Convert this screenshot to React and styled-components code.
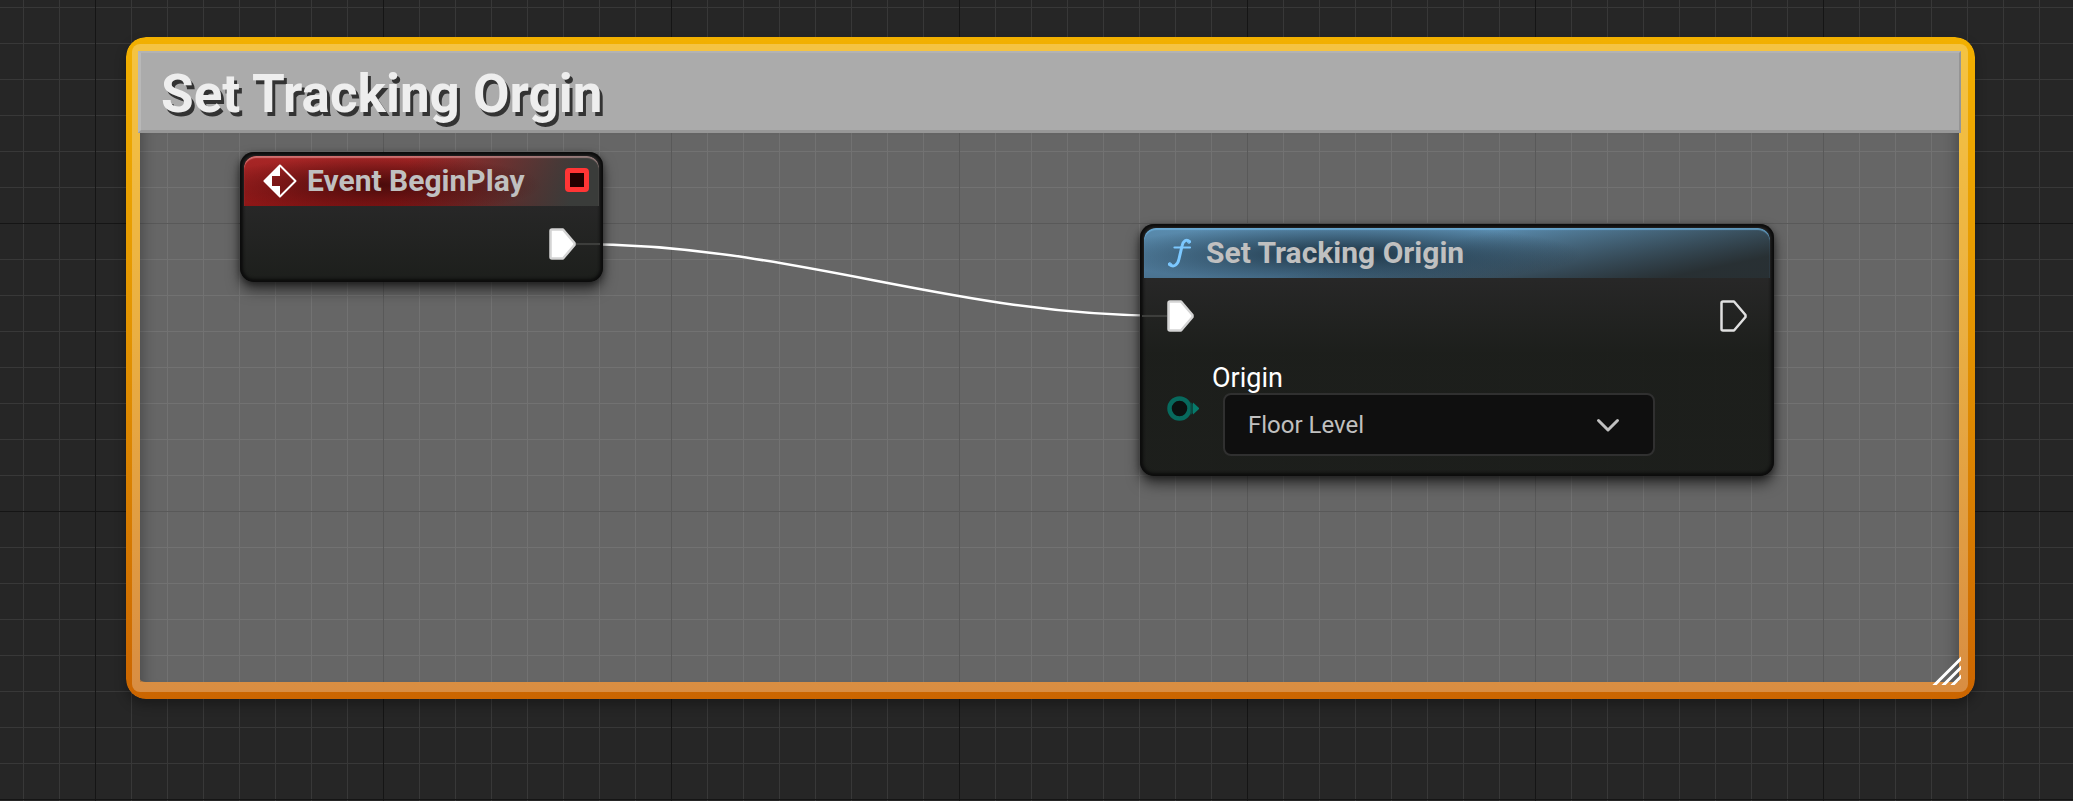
import React from 'react';
import styled, { createGlobalStyle } from 'styled-components';

const Global = createGlobalStyle`
  * { box-sizing: border-box; }
  body { margin: 0; background: #262626; }
`;

const line = (dir, color, size) =>
  `linear-gradient(${dir}, ${color} 1px, transparent 1px) 95px 223px / ${size}px ${size}px`;

const Canvas = styled.main`
  position: relative;
  min-height: 100vh;
  padding: 37px 98px 102px 126px;
  overflow: hidden;
  font-family: Roboto, "Liberation Sans", sans-serif;
  background:
    ${line('to right', '#151515', 288)},
    ${line('to bottom', '#151515', 288)},
    ${line('to right', '#383838', 36)},
    ${line('to bottom', '#383838', 36)},
    #262626;
`;

const Comment = styled.section`
  position: relative;
  display: flex;
  flex-direction: column;
  min-height: 662px;
  padding: 14px 14px 14px 12px;
  border-radius: 20px;
  box-shadow: 0 6px 12px rgba(0, 0, 0, 0.3);

  &::before {
    content: "";
    position: absolute;
    inset: 0;
    border: solid transparent;
    border-width: 14px 16px 17px 14px;
    border-radius: 20px;
    background: linear-gradient(#f2b000, #e39300 45%, #cb6500) border-box;
    mask: linear-gradient(#000 0 0) padding-box exclude, linear-gradient(#000 0 0) border-box;
  }

  &::after {
    content: "";
    position: absolute;
    inset: 7px 7px 7px 6px;
    border-radius: 8px;
    background: rgba(255, 255, 255, 0.26);
  }
`;

const CommentHeader = styled.header`
  position: relative;
  z-index: 1;
  height: 82px;
  padding: 0 20px;
  border: solid;
  border-width: 2px 2px 3px 3px;
  border-color: #b3b3b3 #959595 #979797 #b8b8b8;
  background: #ababab;
`;

const CommentTitle = styled.h1`
  margin: 0;
  color: #eee;
  font-size: 53px;
  font-weight: 700;
  line-height: 82px;
  white-space: nowrap;
  text-shadow: 3px 4px 0 #333;
`;

const CommentBody = styled.div`
  position: relative;
  z-index: 1;
  display: flex;
  flex: 1;
  align-items: flex-end;
  justify-content: flex-end;
  &::before {
    content: "";
    position: absolute;
    inset: 0 2px 3px 2px;
    background: rgba(255, 255, 255, 0.05);
    box-shadow: inset 14px 0 14px -12px rgba(0, 0, 0, 0.3), inset -14px 0 14px -12px rgba(0, 0, 0, 0.3);
  }
`;

const ResizeGrip = styled.svg`
  position: relative;
  width: 29px;
  height: 29px;
  stroke: #fff;
  stroke-width: 3;
`;

const Wire = styled.svg`
  position: absolute;
  z-index: 2;
  left: 576px;
  top: 240px;
  width: 592px;
  height: 80px;
  fill: none;
  stroke: #fff;
  stroke-width: 2.5;
`;

const Node = styled.article`
  position: absolute;
  z-index: 3;
  left: ${(p) => p.$x}px;
  top: ${(p) => p.$y}px;
  width: ${(p) => p.$w}px;
  padding: 4px;
  border-radius: 14px;
  background: linear-gradient(rgba(38, 38, 38, 0.98) 54px, rgba(27, 29, 26, 0.98) 130px);
  box-shadow:
    inset 0 0 3px 3px #0c0c0c,
    0 8px 14px rgba(0, 0, 0, 0.55),
    0 2px 6px rgba(0, 0, 0, 0.4);
`;

const heads = {
  event: `
    radial-gradient(ellipse 46% 60% at 38% 58%, rgba(60, 8, 8, 0.85), rgba(60, 8, 8, 0) 100%),
    linear-gradient(105deg, rgba(58, 60, 58, 0) 45%, rgba(58, 60, 58, 1) 92%),
    linear-gradient(#a92727, #8c1616)`,
  call: `
    radial-gradient(ellipse 38% 60% at 32% 52%, rgba(24, 44, 58, 0.9), rgba(24, 44, 58, 0) 100%),
    linear-gradient(168deg, rgba(38, 44, 46, 0) 42%, rgba(38, 44, 46, 0.95) 88%),
    linear-gradient(#5a8cae, #4a7391)`,
};

const NodeHeader = styled.header`
  display: flex;
  align-items: center;
  height: 50px;
  padding: 0 10px 0 ${(p) => (p.$kind === 'event' ? 18 : 23)}px;
  gap: ${(p) => (p.$kind === 'event' ? 10 : 14)}px;
  border-radius: 12px 12px 0 0;
  background: ${(p) => heads[p.$kind]};
  box-shadow: inset 0 2px 1px ${(p) => (p.$kind === 'event' ? 'rgba(255, 200, 200, 0.45)' : 'rgba(110, 180, 225, 0.7)')};
`;

const NodeTitle = styled.h2`
  flex: 1;
  margin: 0;
  color: #c0c0c0;
  font-size: 30px;
  font-weight: 700;
  line-height: 34px;
  white-space: nowrap;
`;

const Delegate = styled.button`
  width: 24px;
  height: 24px;
  margin-bottom: 2px;
  padding: 0;
  border: 5px solid #ff3535;
  border-radius: 4px;
  background: #200000;
`;

const PinRow = styled.div`
  display: flex;
  justify-content: ${(p) => (p.$end ? 'flex-end' : 'space-between')};
  padding: 22px 23px 0;
`;

const ExecSvg = styled.svg`
  display: block;
  width: 27px;
  height: 32px;
  overflow: visible;
`;

const EventBody = styled.div`
  height: 72px;
`;

const CallBody = styled.div`
  height: 194px;
`;

const Param = styled.div`
  display: flex;
  align-items: flex-start;
  padding: 31px 23px 0;
`;

const EnumPin = styled.svg`
  width: 32px;
  height: 26px;
  margin-top: 33px;
`;

const Field = styled.div`
  display: flex;
  flex-direction: column;
  margin-left: 13px;
`;

const Label = styled.label`
  color: #fff;
  font-size: 27px;
  line-height: 30px;
`;

const SelectWrap = styled.div`
  position: relative;
  width: 432px;
  margin-left: 11px;
`;

const Select = styled.select`
  display: block;
  appearance: none;
  width: 100%;
  height: 63px;
  padding: 0 60px 0 23px;
  border: 2px solid #303030;
  border-radius: 8px;
  background: #0f0f0f;
  color: #c0c0c0;
  font: 24px Roboto, "Liberation Sans", sans-serif;
`;

const Chevron = styled.svg`
  position: absolute;
  top: 24px;
  right: 35px;
  width: 24px;
  height: 16px;
  fill: none;
  stroke: #c0c0c0;
  stroke-width: 3;
  stroke-linecap: round;
  stroke-linejoin: round;
  pointer-events: none;
`;

const EventIcon = () => (
  <svg width="35" height="34" viewBox="0 0 35 34">
    <path d="M18 1.500 33.500 17 18 32.500 2.500 17Z" fill="none" stroke="#fff" strokeWidth="2" strokeLinejoin="round" />
    <path d="M18 0.500V12H10V22H18V33.500L1.500 17Z" fill="#fff" />
  </svg>
);

const FunctionIcon = () => (
  <svg width="25" height="30" viewBox="0 0 25 30" fill="none" stroke="#7cc8ff" strokeLinecap="round">
    <path d="M22.500 3.500C19.500 0.500 16 3 15 8L12 21C10.800 26.500 7 30 2.500 26.500" strokeWidth="3" />
    <path d="M7.500 9.500H23" strokeWidth="2.200" />
    <circle cx="22" cy="3.800" r="1.500" />
    <circle cx="2.800" cy="26" r="1.400" />
  </svg>
);

const ExecPin = ({ connected, link }) => (
  <ExecSvg viewBox="0 0 27 32">
    {link && <path d={link} stroke="#3d3e3c" strokeWidth="2" />}
    <path
      d="M3 1.500H14L25.500 15V17L14 30.500H3Q1.500 30.500 1.500 29V3Q1.500 1.500 3 1.500Z"
      fill={connected ? '#fff' : 'none'}
      stroke={connected ? '#d4d4d4' : '#e0e0e0'}
      strokeWidth="2.500"
      strokeLinejoin="round"
    />
  </ExecSvg>
);

export default function App() {
  return (
    <>
      <Global />
      <Canvas>
        <Comment>
          <CommentHeader>
            <CommentTitle>Set Tracking Orgin</CommentTitle>
          </CommentHeader>
          <CommentBody>
            <ResizeGrip viewBox="0 0 29 29">
              <path d="M0 31.500 31.500 0M9 31.500 31.500 9M18 31.500 31.500 18" />
            </ResizeGrip>
          </CommentBody>
        </Comment>

        <Wire viewBox="0 0 592 80">
          <path d="M0 4C220 4 372 76 592 76" />
        </Wire>

        <Node $x={240} $y={152} $w={363}>
          <NodeHeader $kind="event">
            <EventIcon />
            <NodeTitle>Event BeginPlay</NodeTitle>
            <Delegate type="button" aria-label="Output delegate" />
          </NodeHeader>
          <EventBody>
            <PinRow $end>
              <ExecPin connected link="M26 16H51" />
            </PinRow>
          </EventBody>
        </Node>

        <Node $x={1140} $y={224} $w={634}>
          <NodeHeader $kind="call">
            <FunctionIcon />
            <NodeTitle>Set Tracking Origin</NodeTitle>
          </NodeHeader>
          <CallBody>
            <PinRow>
              <ExecPin connected link="M-25 16H0" />
              <ExecPin />
            </PinRow>
            <Param>
              <EnumPin viewBox="0 0 32 26">
                <circle cx="12.500" cy="12.500" r="10" fill="#0b1110" stroke="#07695d" strokeWidth="4.500" />
                <path d="M23.500 6 26 8V17L23.500 19Z" fill="#0a4a42" />
                <path d="M26 6.500 32.500 12.500 26 18.500Z" fill="#077a6b" />
              </EnumPin>
              <Field>
                <Label htmlFor="origin">Origin</Label>
                <SelectWrap>
                  <Select id="origin" defaultValue="floor">
                    <option value="floor">Floor Level</option>
                  </Select>
                  <Chevron viewBox="0 0 24 16">
                    <path d="M2.500 3.500 12 13 21.500 3.500" />
                  </Chevron>
                </SelectWrap>
              </Field>
            </Param>
          </CallBody>
        </Node>
      </Canvas>
    </>
  );
}
